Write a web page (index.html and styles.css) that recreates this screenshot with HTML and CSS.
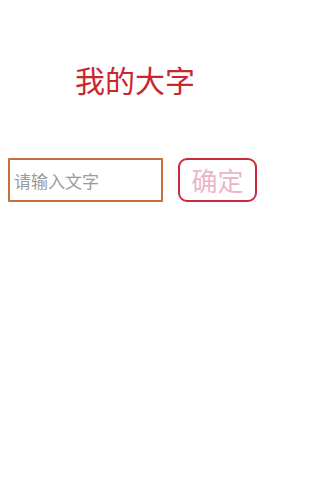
FILE: index.html
```html
<!DOCTYPE html>
<html lang="zh">
<head>
<meta charset="utf-8">
<title>我的大字</title>
<link rel="stylesheet" href="styles.css">
</head>
<body>
<div class="page">
  <h1 class="title">我的大字</h1>
  <div class="row">
    <input class="text-input" type="text" placeholder="请输入文字">
    <button class="confirm">确定</button>
  </div>
</div>
</body>
</html>
```
FILE: styles.css
```css
html, body {
  margin: 0;
  padding: 0;
  background: #ffffff;
}
body {
  font-family: "Noto Sans CJK SC", "Noto Sans", sans-serif;
}
.page {
  display: flex;
  flex-direction: column;
  align-items: stretch;
  width: 270px;
  height: 480px;
}
.title {
  margin: 64px 0 0 0;
  font-size: 30px;
  line-height: 30px;
  font-weight: normal;
  color: #c9262e;
  text-align: center;
}
.row {
  display: flex;
  align-items: center;
  gap: 15px;
  margin-top: 64px;
  padding-left: 8px;
}
.text-input {
  box-sizing: border-box;
  width: 155px;
  height: 44px;
  border: 2px solid #c66f3c;
  border-radius: 1px;
  padding: 0 0 0 4px;
  margin: 0;
  font-family: "Noto Sans CJK SC", sans-serif;
  font-size: 17px;
  color: #333;
  background: #fff;
  outline: none;
}
.text-input::placeholder {
  color: #9a9a9a;
}
.confirm {
  box-sizing: border-box;
  width: 79px;
  height: 44px;
  border: 2px solid #c92a3c;
  border-radius: 9px;
  background: #fff;
  color: #ebb6c8;
  font-family: "Noto Sans CJK SC", sans-serif;
  font-size: 26px;
  line-height: 1;
  padding: 0;
  margin: 0;
}
```
